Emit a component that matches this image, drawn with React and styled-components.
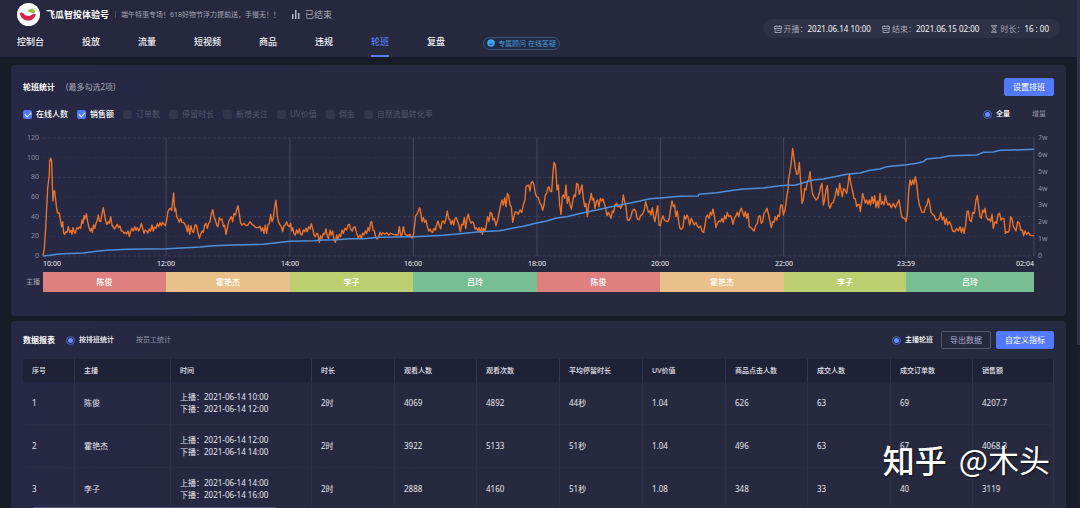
import React, { useState } from "react";
import styled, { createGlobalStyle } from "styled-components";

const GlobalStyle = createGlobalStyle`
    * {
        box-sizing: border-box;
    }
    body {
        margin: 0;
        background: #181b28;
        color: #e4e5ee;
        font-family: "Noto Sans", "Noto Sans CJK SC", sans-serif;
        font-size: 8px;
        line-height: 12px;
    }
    button, input {
        font: inherit;
        margin: 0;
    }
`

const Page = styled.div`
    display: flex;
    height: 100vh;
    overflow: hidden;
    position: relative;
`
const Content = styled.div`
    flex: 1;
    min-width: 0;
`
const ScrollRail = styled.div`
    width: 3px;
    background: #1a1d2b;
`
const ScrollThumb = styled.div`
    height: 68%;
    background: #2a3556;
`

/* header */
const Header = styled.header`
    display: flex;
    align-items: center;
    justify-content: space-between;
    height: 57px;
    padding: 0 17px;
    background: linear-gradient(90deg, #27283f, #26293c);
`
const HeaderLeft = styled.div`
    display: flex;
    flex-direction: column;
`
const Brand = styled.div`
    display: flex;
    align-items: center;
    height: 29px;
`
const BrandName = styled.h1`
    margin: 0 6px;
    font-size: 9px;
    font-weight: 700;
    color: #ffffff;
`
const BrandSlogan = styled.span`
    padding-left: 5px;
    margin-right: 12px;
    border-left: 1px solid #4a4c60;
    font-size: 7px;
    line-height: 7px;
    color: #a5a6b5;
`
const LiveState = styled.span`
    display: flex;
    align-items: center;
    gap: 5px;
    font-size: 9px;
    color: #a5a6b5;
`
const Nav = styled.nav`
    display: flex;
    align-items: center;
    gap: 38px;
    height: 28px;
`
const NavLink = styled.a`
    height: 28px;
    line-height: 26px;
    font-size: 9px;
    font-weight: 500;
    text-decoration: none;
    color: ${props => props.$active ? "#5b7cf0" : "#f1f1f6"};
    border-bottom: 2px solid ${props => props.$active ? "#5b7cf0" : "transparent"};
`
const Adviser = styled.button`
    display: flex;
    align-items: center;
    gap: 3px;
    height: 13px;
    padding: 0 3px;
    border: 1px solid #35587c;
    border-radius: 7px;
    background: #222a42;
    font-size: 7px;
    line-height: 11px;
    color: #4a9ad8;
`
const LiveInfo = styled.div`
    display: flex;
    align-items: center;
    gap: 11px;
    height: 19px;
    padding: 0 11px;
    border-radius: 10px;
    background: #2f3146;
    white-space: nowrap;
`
const InfoItem = styled.span`
    display: flex;
    align-items: center;
    color: #a5a6b5;

    svg {
        margin-right: 2px;
    }
    b {
        font-weight: 400;
        color: #f4f4f8;
    }
`

/* cards */
const Main = styled.main`
    display: flex;
    flex-direction: column;
    gap: 5px;
    padding: 8px 11px 0;
`
const Card = styled.section`
    padding: 0 12px ${props => props.$bottom || 0}px;
    border-radius: 4px;
    background: linear-gradient(90deg, #262845, #27293f 40%);
`
const CardHead = styled.div`
    display: flex;
    align-items: center;
    gap: 11px;
    height: ${props => props.$tall ? 44 : 38}px;
`
const CardTitle = styled.h2`
    margin: 0;
    font-size: 8px;
    font-weight: 700;
    color: #ffffff;
`
const CardHint = styled.span`
    color: #a5a6b5;
`
const HeadActions = styled.div`
    display: flex;
    align-items: center;
    gap: ${props => props.$gap || 5}px;
    margin-left: auto;
`
const Button = styled.button`
    height: 18px;
    padding: 0 8px;
    border: 1px solid ${props => props.$ghost ? "#54566c" : "#5279fb"};
    border-radius: 2px;
    background: ${props => props.$ghost ? "transparent" : "#5279fb"};
    color: ${props => props.$ghost ? "#a9abd0" : "#ffffff"};
    line-height: 16px;
    cursor: pointer;
`
const OptionRow = styled.div`
    display: flex;
    align-items: center;
    justify-content: space-between;
    height: 10px;
    padding-right: 8px;
`
const Options = styled.div`
    display: flex;
    align-items: center;
    gap: 9px;
`
const Option = styled.label`
    display: flex;
    align-items: center;
    gap: 4px;
    font-size: ${props => props.$small ? 7 : 8}px;
    font-weight: ${props => props.$on ? 500 : 400};
    color: ${props => props.$on ? "#ffffff" : props.$dim ? "#56586d" : "#9293a5"};
    white-space: nowrap;
`
const Check = styled.input`
    appearance: none;
    width: 9px;
    height: 9px;
    border-radius: 2px;
    background: #34364c;

    &:checked {
        background: #5279fb;
    }
    &:checked::after {
        content: "";
        display: block;
        width: 5px;
        height: 3px;
        margin: 2px;
        border-left: 1px solid #ffffff;
        border-bottom: 1px solid #ffffff;
        transform: rotate(-45deg);
    }
`
const Radio = styled.input`
    appearance: none;
    display: grid;
    place-items: center;
    width: 9px;
    height: 9px;
    border: 1px solid transparent;
    border-radius: 50%;

    &:checked {
        border-color: #4565c4;
    }
    &:checked::after {
        content: "";
        width: 5px;
        height: 5px;
        border-radius: 50%;
        background: #6a8cff;
    }
`

/* chart */
const ChartGrid = styled.div`
    display: grid;
    grid-template-columns: 20px 1fr 20px;
    margin-top: 19px;
`
const YAxis = styled.div`
    display: flex;
    flex-direction: column;
    justify-content: space-between;
    margin: -6px 0;
    padding: 0 4px;
    font-size: 7px;
    color: #8f90a3;
    text-align: ${props => props.$right ? "left" : "right"};
`
const Plot = styled.svg`
    display: block;
    width: 100%;
    height: 118px;
    overflow: visible;
`
const shiftColumns = "123fr 124fr 123fr 124fr 123fr 124fr 122fr 128fr"
const XAxis = styled.div`
    display: grid;
    grid-template-columns: ${shiftColumns};
    grid-column: 2;
    font-size: 7px;
    line-height: 16px;
    color: #f1f1f6;
`
const Tick = styled.div`
    display: flex;
    justify-content: space-between;

    span:first-child {
        transform: translateX(${props => props.$first ? "0" : "-50%"});
    }
`
const ShiftGrid = styled.div`
    display: grid;
    grid-template-columns: 20px 1fr 20px;
`
const ShiftLabel = styled.span`
    padding-left: 3px;
    font-size: 7px;
    line-height: 20px;
    color: #a5a6b5;
`
const ShiftBar = styled.div`
    display: grid;
    grid-template-columns: ${shiftColumns};
`
const Shift = styled.div`
    height: 20px;
    line-height: 20px;
    text-align: center;
    font-weight: 500;
    color: #ffffff;
    background: ${props => props.$color};
`

/* table */
const Table = styled.table`
    width: 100%;
    table-layout: fixed;
    border-collapse: separate;
    border-spacing: 0;

    th {
        height: 23px;
        padding: 0 9px;
        background: #1f2136;
        border-right: 1px solid #34364c;
        font-size: 7px;
        font-weight: 500;
        text-align: left;
    }
    td {
        height: 43px;
        padding: 0 9px;
        border-right: 1px solid #2e3147;
        border-bottom: 1px solid #2b2d44;
    }
`
const TableScroll = styled.div`
    position: absolute;
    left: 34px;
    bottom: 0;
    width: 242px;
    height: 1px;
    background: #55567a;
`
const Watermark = styled.div`
    position: absolute;
    right: 30px;
    bottom: 33px;
    display: flex;
    gap: 12px;
    font-family: "Noto Sans CJK SC", sans-serif;
    font-size: 31px;
    line-height: 32px;
    color: #ffffff;
    text-shadow: 1px 1px 2px rgba(0, 0, 0, 0.6);

    b {
        font-size: 32px;
        font-weight: 500;
    }
`

const navItems = ["控制台", "投放", "流量", "短视频", "商品", "违规", "轮班", "复盘"]
const metrics = ["在线人数", "销售额", "订单数", "停留时长", "新增关注", "UV价值", "佣金", "自然流量转化率"]
const ticks = ["10:00", "12:00", "14:00", "16:00", "18:00", "20:00", "22:00", "23:59"]
const shifts = [
    ["陈俊", "#de7f80"],
    ["霍艳杰", "#e9c08a"],
    ["李子", "#bccf70"],
    ["吕玲", "#79bd92"],
    ["陈俊", "#de7f80"],
    ["霍艳杰", "#e9c08a"],
    ["李子", "#bccf70"],
    ["吕玲", "#79bd92"],
]
const columns = [
    ["序号", 52], ["主播", 96], ["时间", 141], ["时长", 83], ["观看人数", 82], ["观看次数", 83],
    ["平均停留时长", 83], ["UV价值", 83], ["商品点击人数", 82], ["成交人数", 83], ["成交订单数", 82], ["销售额", 81],
]
const rows = [
    ["1", "陈俊", ["10:00", "12:00"], "2时", "4069", "4892", "44秒", "1.04", "626", "63", "69", "4207.7"],
    ["2", "霍艳杰", ["12:00", "14:00"], "2时", "3922", "5133", "51秒", "1.04", "496", "63", "67", "4068.3"],
    ["3", "李子", ["14:00", "16:00"], "2时", "2888", "4160", "51秒", "1.08", "348", "33", "40", "3119"],
]

// each part is [x offset, points counted from that offset]
const onlineParts = [
    [0, "129,392 133,370 137,310 140,250 143,190 146,165 148,150 149,108 152,100 155,108 157,180 159,228 161,200 164,197 167,225 170,250 173,264 178,264 182,290 185,305 188,290 191,325 194,328 198,320 201,322 205,305 209,322 213,316 216,328 219,308 222,320 226,325 230,308 234,312 238,306 242,310 246,285 249,295 252,272 255,282 259,266 263,290 267,308 271,318 274,310 277,322 281,300 284,310 288,295 292,285 295,270 298,288 302,290 306,268 310,248 314,270 318,292 321,298 325,290 328,295 332,275 336,300 340,306 344,312 348,305 352,298 356,308 360,303 364,318 368,318 372,325 376,322 380,326 384,318 388,334 392,318 396,310 400,318 404,305 408,316 412,308 416,318 420,310 424,295 428,310 432,325 436,315 440,318 444,324 448,312 452,318 456,300 460,318 464,306 468,310 472,296 476,305 480,293 484,302 488,292 492,298 496,302 500,285 504,260 508,252 512,250 515,256 518,228 521,204 524,258 527,250 530,275 534,282 538,292 542,280 546,292 550,292 554,296 558,304 562,320 565,300 569,328 573,302 577,320 581,322 585,300 589,300 593,318 598,340 602,328 606,318 610,322 614,300 618,295 622,310 626,296 630,290 634,268 638,254 642,275 646,285 650,300 654,305 658,278 662,285 666,282 670,305 674,300 678,328 682,310 686,290 690,282 694,275 698,290 702,265 706,270 710,255 714,242 718,268 722,295 726,300 732,295 738,302 744,300 750,290 756,298 762,302 768,308 774,308 780,304 784,318 788,308 792,325 796,300 800,325 804,300 808,295 812,268 816,290 820,278 824,245 828,226 832,275 836,292 840,300 844,305 848,320 852,302 856,300 860,290 864,302 868,305"],
    [840, "32,295 35,318 38,308 42,326 46,330 50,315 54,325 58,312 62,328 66,330 70,315 74,320 78,310 82,320 86,305 90,312 94,296 98,310 102,330 106,335 110,325 114,328 118,352 122,332 126,340 130,325 134,328 138,312 142,335 146,340 150,315 154,330 158,318 162,345 166,352 170,330 174,343 178,328 182,335 186,315 190,325 195,310 200,315 204,300 208,298 213,315 217,318 220,308 225,305 230,325 235,338 240,330 244,340 248,325 252,330 256,318 260,325 264,308 268,318 272,292 275,290 279,315 283,318 287,335 292,342 296,335 300,322 304,330 308,323 314,328 320,323 326,330 332,325 340,328 348,330 354,330 358,305 362,332 366,330 370,305 375,328 380,330 385,332 390,328 394,338 398,338 401,325 404,300 407,272 411,268 415,258 419,248 422,262 426,290 430,278 434,292 438,285 442,305 446,318 450,312 454,320 458,322 462,310 466,315 470,300 474,288 478,302 482,312 486,290 490,288 494,295 498,280 502,258 506,282 509,282 513,298 517,286 521,300 525,280 529,278 533,290 537,302 541,320 545,298 549,300 553,278 557,310 561,280 565,268 569,285 573,295 577,290 581,295 585,312 589,308 593,318 597,308 601,322 605,308 607,328 611,310 615,318 619,300 623,275 627,290 631,262 635,265 639,285 643,280 648,302 653,285 658,260 662,240 666,225 670,240 674,218 678,245 682,205 686,212 690,240 694,245 698,292 702,275 706,260 711,262 715,268 720,255 725,262 730,240 735,225 738,185 742,182 746,180 750,198 754,172 758,170 762,180 766,205"],
    [1590, "20,215 25,218 30,235 34,240 38,256 42,240 46,210 50,205 54,188 57,185 61,200 65,200 69,140 72,112 76,120 79,160 81,195 85,180 89,240 93,268 97,215 100,210 104,220 108,180 112,235 116,215 120,240 124,252 128,230 132,210 136,215 140,175 144,178 148,208 152,195 156,180 160,220 164,245 168,235 172,275 176,240 180,225 184,205 187,225 191,220 195,250 199,230 203,225 207,245 211,220 215,228 219,222 223,235 227,250 231,272 235,262 239,270 243,280 247,258 251,262 255,240 260,235 264,245 268,242 272,250 276,240 280,210 284,230 288,245 292,285 297,286 302,278 307,258 312,252 317,258 322,282 327,284 332,272 337,268 342,258 347,230 351,245 355,262 359,258 363,270 367,248 371,275 375,290 379,262 383,242 387,300 391,302 395,282 399,272 403,285 408,288 413,290 418,280 422,250 426,228 430,245 434,240 438,275 442,258 446,290 450,310 454,313 459,308 463,272 467,282 471,270 475,280 479,300 484,280 488,290 493,300 498,292 503,305 507,308 511,303 516,318 521,322 525,300 529,275 533,270 537,280 541,262 545,270 549,252 553,272 558,308 562,295 567,288 572,290 576,280 580,292 584,272 588,282 592,262 596,275 601,272 605,280 609,298 613,280 618,272 622,262 626,275 630,258 634,250 638,262 642,275 646,260 650,280 654,265 658,305 663,308 667,312 672,318 677,302 682,295 686,275 690,272 694,295 698,290 702,265 706,260 711,250 716,270 720,290 724,308 728,290 732,292 736,275 740,285 744,270 748,275 752,240 756,240 760,270"],
    [2340, "15,255 18,235 21,210 24,195 26,160 30,140 34,110 38,70 42,100 46,130 50,148 54,145 58,112 62,170 66,235 70,225 74,190 78,195 82,170 86,165 90,140 94,180 97,205 102,215 108,225 113,220 118,205 122,185 126,175 130,240 134,225 138,195 142,182 146,240 150,250 155,235 160,232 165,215 170,190 175,212 179,175 183,195 187,215 191,190 195,195 200,205 204,180 208,148 213,178 218,200 222,220 226,222 230,245 234,238 238,240 241,260 245,230 248,205 252,220 256,235 260,225 264,238 268,225 272,240 276,215 280,235 284,212 288,248 292,228 296,248 300,205 304,238 308,230 312,240 316,212 320,230 324,240 328,235 334,248 340,235 346,248 352,235 357,225 361,250 365,275 370,280 374,280 378,290 382,270 386,200 390,165 394,180 398,165 402,178 406,155 410,175 414,215 418,240 422,250 426,262 432,262 437,245 441,240 445,220 449,235 453,262 458,268 463,272 468,285 473,285 478,280 483,262 487,285 491,275 495,298 499,280 503,300 508,290 513,300 518,318 524,320 530,310 535,318 540,305 544,322 548,308 552,325 557,300 561,260 565,258 569,285 574,290 578,262 583,265 588,225 592,212 596,245 600,275 604,280 608,255 612,262 615,250 619,275 624,285 628,282 632,290 636,268 640,310 645,290 650,295 654,268 659,265 663,285 668,280 672,282 676,325 680,320 684,322 688,315 692,275 696,280 700,305 704,310 708,318 713,290 718,295 722,315 727,315 731,332 735,318 740,328 745,322 750,330 755,332 762,332"],
]
const salesParts = [
    [0, "129,393 150,391 170,388 190,386 250,384 290,379 320,376 380,373 500,371 560,368 600,366 640,362 700,360 790,358 850,351"],
    [840, "30,349 100,347 130,345 170,344 210,341 250,341 300,337 400,335 450,333 490,331 540,326 600,320 660,317 700,309 730,304"],
    [1590, "20,294 50,288 80,279 110,275 160,263 200,255 240,246 290,236 330,228 360,221 400,218 450,214 505,213 507,208 560,203 610,196 640,192 700,189 750,182"],
    [2340, "20,181 45,181 80,170 100,165 130,162 200,148 240,144 270,136 300,132 320,125 380,119 410,115 430,110 440,102 480,98 510,92 590,90 610,82 640,81 660,76 700,75 762,73"],
]

const joinParts = (parts) => parts.map(([offset, points]) => points.split(" ").map(point => {
    const [x, y] = point.split(",").map(Number)
    return `${x + offset},${y}`
}).join(" ")).join(" ")

const Logo = () => (
    <svg width="23" height="23" viewBox="0 0 23 23">
        <circle cx="11.5" cy="11.5" r="11.5" fill="#ffffff"/>
        <path d="M2.800 10c1-.8 2.800-.8 3.600.2 1 1.600 2.400 2.700 4.800 2.700 2.300 0 3.800-.9 5-2.500l2.600.6c-.6 4-3.700 6.600-7.600 6.600-4.300 0-7.700-2.900-8.400-7.600z" fill="#d9224c"/>
        <path d="M10.600 8.600c1-2.300 3-3.300 5.300-3 .2 1.200 1 2 2.500 2.600-.5 1.400-1.600 2.100-3.200 1.900-1.500-.2-2.800-1.200-4.600-1.500z" fill="#8cc63f"/>
    </svg>
)

const BarsIcon = () => (
    <svg width="8" height="9" viewBox="0 0 8 9" fill="#b5b6c4">
        <rect x="0" y="4" width="1.500" height="5"/>
        <rect x="3" y="0" width="1.500" height="9"/>
        <rect x="6" y="3" width="1.500" height="6"/>
    </svg>
)

const CalendarIcon = () => (
    <svg width="8" height="8" viewBox="0 0 8 8" fill="none" stroke="#a5a6b5">
        <path d="M.5 1.500h7v2h-7zM1 3.500v4h6v-4M2.200.2v1.500M5.800.2v1.500M2.500 5.500h3" strokeWidth=".9"/>
    </svg>
)

const HourglassIcon = () => (
    <svg width="8" height="8" viewBox="0 0 8 8" fill="none" stroke="#a5a6b5">
        <path d="M1 .6h6M1 7.400h6M2 .8v1.700L4 4l2-1.500V.8M2 7.200V5.500L4 4l2 1.500v1.700M2.500 6.300h3M2.500 1.800h3" strokeWidth=".8"/>
    </svg>
)

const AdviserIcon = () => (
    <svg width="8" height="8" viewBox="0 0 8 8">
        <circle cx="4" cy="4" r="3.800" fill="#3ea6ee"/>
        <path d="M2 4.400c.5 1.700 3.500 1.700 4 0-1.200.5-2.800.5-4 0z" fill="#1d3f6b"/>
    </svg>
)

const Chart = () => (
    <>
        <ChartGrid>
            <YAxis>
                {[120, 100, 80, 60, 40, 20, 0].map(value => <span key={value}>{value}</span>)}
            </YAxis>
            <Plot viewBox="129 39 2973 354" preserveAspectRatio="none">
                {[39, 98, 157, 216, 275, 334, 393].map((y, index) => (
                    <line key={y} x1="129" x2="3102" y1={y} y2={y} stroke={index % 2 === 0 ? "#3b3d55" : "#2f3149"}
                        strokeDasharray="3 2" vectorEffect="non-scaling-stroke"/>
                ))}
                {[498, 870, 1240, 1611, 1981, 2351, 2717, 3102].map(x => (
                    <line key={x} x1={x} x2={x} y1="39" y2="393" stroke="#45475f" vectorEffect="non-scaling-stroke"/>
                ))}
                <polyline points={joinParts(onlineParts)} fill="none" stroke="#e9732b" strokeWidth="1.4"
                    strokeLinejoin="round" vectorEffect="non-scaling-stroke"/>
                <polyline points={joinParts(salesParts)} fill="none" stroke="#5090d8" strokeWidth="1.5"
                    strokeLinejoin="round" vectorEffect="non-scaling-stroke"/>
            </Plot>
            <YAxis $right>
                {["7w", "6w", "5w", "4w", "3w", "2w", "1w", "0"].map(value => <span key={value}>{value}</span>)}
            </YAxis>
            <XAxis>
                {ticks.map((tick, index) => (
                    <Tick key={tick} $first={index === 0}>
                        <span>{tick}</span>
                        {index === ticks.length - 1 && <span>02:04</span>}
                    </Tick>
                ))}
            </XAxis>
        </ChartGrid>
        <ShiftGrid>
            <ShiftLabel>主播</ShiftLabel>
            <ShiftBar>
                {shifts.map(([name, color], index) => <Shift key={index} $color={color}>{name}</Shift>)}
            </ShiftBar>
        </ShiftGrid>
    </>
)

const App = () => {
    const [picked, setPicked] = useState(["在线人数", "销售额"])
    const [mode, setMode] = useState("全量")
    const [groupBy, setGroupBy] = useState("按排班统计")

    const togglePicked = (name) => {
        setPicked(picked.includes(name) ? picked.filter(item => item !== name) : [...picked, name])
    }

    return (
        <Page>
            <GlobalStyle/>
            <Content>
                <Header>
                    <HeaderLeft>
                        <Brand>
                            <Logo/>
                            <BrandName>飞瓜智投体验号</BrandName>
                            <BrandSlogan>端午特惠专场！618好物节浮力提前送，手慢无！！</BrandSlogan>
                            <LiveState><BarsIcon/>已结束</LiveState>
                        </Brand>
                        <Nav>
                            {navItems.map(item => <NavLink key={item} href="#" $active={item === "轮班"}>{item}</NavLink>)}
                            <Adviser><AdviserIcon/>专属顾问 在线答疑</Adviser>
                        </Nav>
                    </HeaderLeft>
                    <LiveInfo>
                        <InfoItem><CalendarIcon/>开播：<b>2021.06.14 10:00</b></InfoItem>
                        <InfoItem><CalendarIcon/>结束：<b>2021.06.15 02:00</b></InfoItem>
                        <InfoItem><HourglassIcon/>时长：<b>16 : 00</b></InfoItem>
                    </LiveInfo>
                </Header>
                <Main>
                    <Card $bottom={24}>
                        <CardHead $tall>
                            <CardTitle>轮班统计</CardTitle>
                            <CardHint>(最多勾选2项)</CardHint>
                            <HeadActions>
                                <Button>设置排班</Button>
                            </HeadActions>
                        </CardHead>
                        <OptionRow>
                            <Options>
                                {metrics.map(name => (
                                    <Option key={name} $on={picked.includes(name)} $dim>
                                        <Check type="checkbox" checked={picked.includes(name)}
                                            disabled={picked.length > 1 && !picked.includes(name)}
                                            onChange={() => togglePicked(name)}/>
                                        {name}
                                    </Option>
                                ))}
                            </Options>
                            <Options>
                                {["全量", "增量"].map(name => (
                                    <Option key={name} $small $on={mode === name}>
                                        <Radio type="radio" name="mode" checked={mode === name} onChange={() => setMode(name)}/>
                                        {name}
                                    </Option>
                                ))}
                            </Options>
                        </OptionRow>
                        <Chart/>
                    </Card>
                    <Card>
                        <CardHead>
                            <CardTitle>数据报表</CardTitle>
                            <Options>
                                {["按排班统计", "按员工统计"].map(name => (
                                    <Option key={name} $small $on={groupBy === name}>
                                        <Radio type="radio" name="group" checked={groupBy === name} onChange={() => setGroupBy(name)}/>
                                        {name}
                                    </Option>
                                ))}
                            </Options>
                            <HeadActions $gap={8}>
                                <Option $small $on>
                                    <Radio type="radio" name="view" defaultChecked/>
                                    主播轮班
                                </Option>
                                <HeadActions>
                                    <Button $ghost>导出数据</Button>
                                    <Button>自定义指标</Button>
                                </HeadActions>
                            </HeadActions>
                        </CardHead>
                        <Table>
                            <colgroup>
                                {columns.map(([name, width]) => <col key={name} width={width}/>)}
                            </colgroup>
                            <thead>
                                <tr>{columns.map(([name]) => <th key={name}>{name}</th>)}</tr>
                            </thead>
                            <tbody>
                                {rows.map(row => (
                                    <tr key={row[0]}>
                                        {row.map((cell, index) => (
                                            <td key={index}>
                                                {Array.isArray(cell) ? (
                                                    <>
                                                        <div>上播：2021-06-14 {cell[0]}</div>
                                                        <div>下播：2021-06-14 {cell[1]}</div>
                                                    </>
                                                ) : cell}
                                            </td>
                                        ))}
                                    </tr>
                                ))}
                            </tbody>
                        </Table>
                    </Card>
                </Main>
            </Content>
            <ScrollRail><ScrollThumb/></ScrollRail>
            <TableScroll/>
            <Watermark><b>知乎</b><span>@木头</span></Watermark>
        </Page>
    )
}

export default App
